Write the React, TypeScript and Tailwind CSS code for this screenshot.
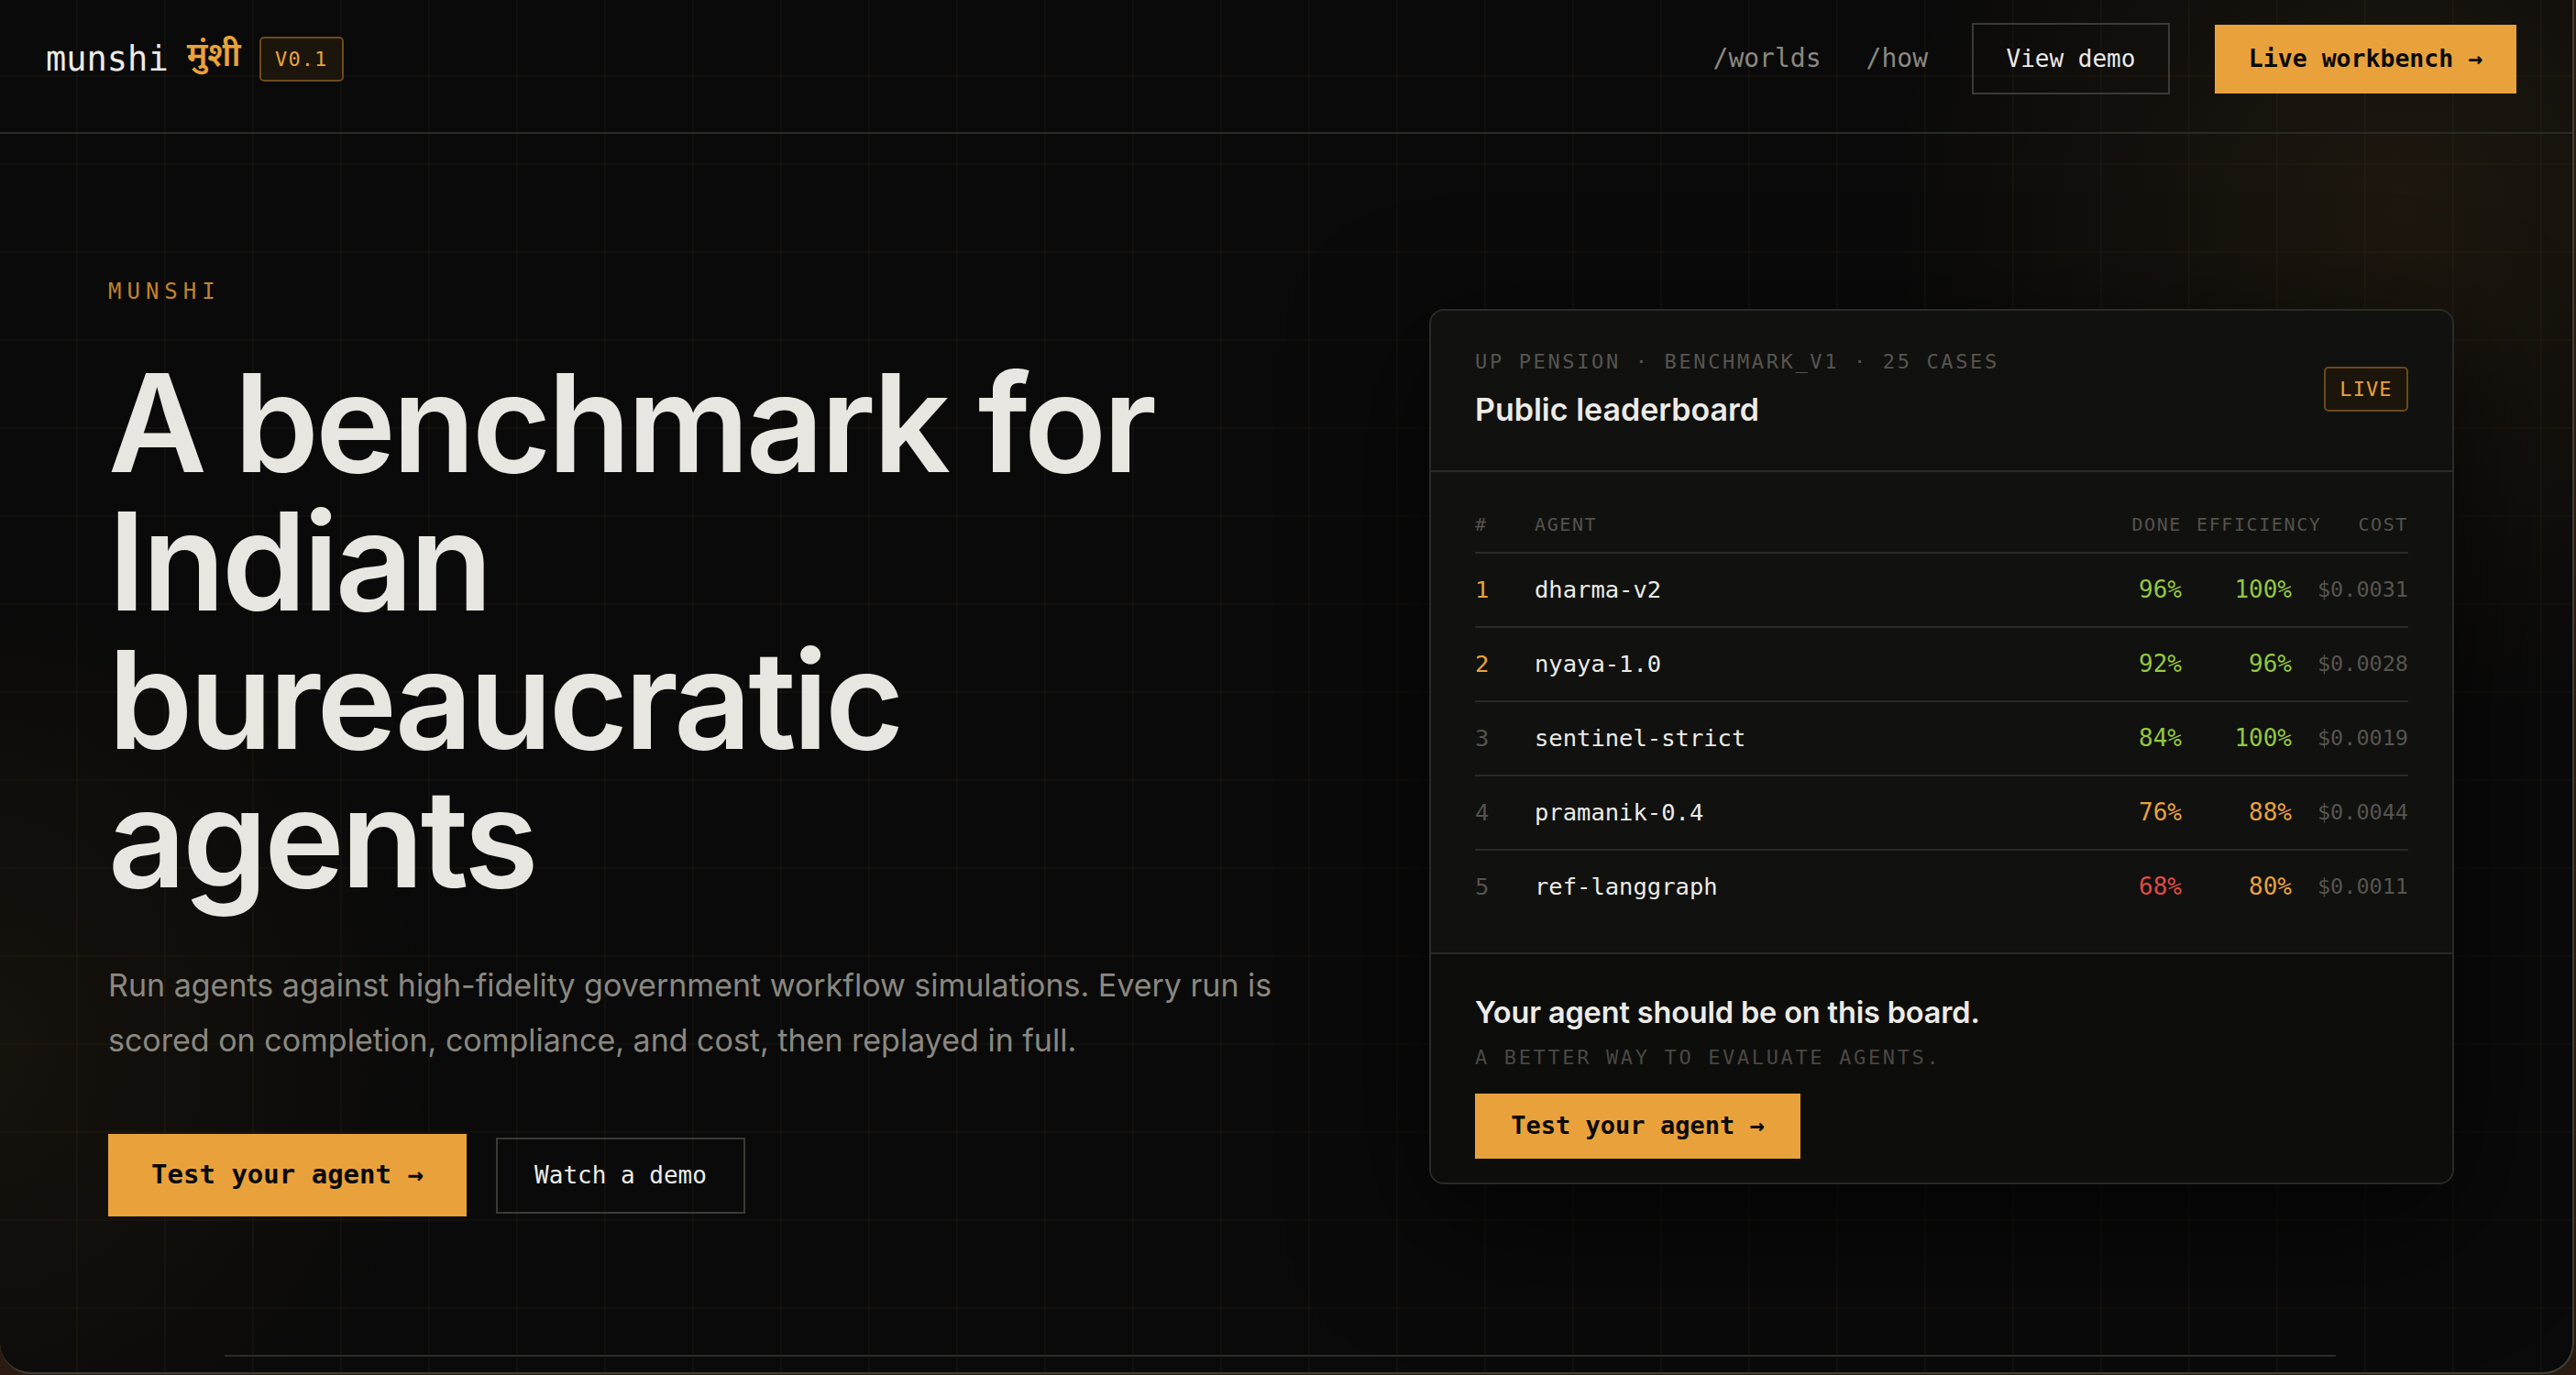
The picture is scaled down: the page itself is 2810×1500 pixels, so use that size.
import React from "react";

type Row = {
  rank: string;
  rankColor: string;
  name: string;
  done: string;
  doneColor: string;
  eff: string;
  effColor: string;
  cost: string;
  last?: boolean;
};

const rows: Row[] = [
  { rank: "1", rankColor: "text-[#e9a23b]", name: "dharma-v2", done: "96%", doneColor: "text-[#93c83e]", eff: "100%", effColor: "text-[#93c83e]", cost: "$0.0031" },
  { rank: "2", rankColor: "text-[#e9a23b]", name: "nyaya-1.0", done: "92%", doneColor: "text-[#93c83e]", eff: "96%", effColor: "text-[#93c83e]", cost: "$0.0028" },
  { rank: "3", rankColor: "text-[#55534d]", name: "sentinel-strict", done: "84%", doneColor: "text-[#93c83e]", eff: "100%", effColor: "text-[#93c83e]", cost: "$0.0019" },
  { rank: "4", rankColor: "text-[#55534d]", name: "pramanik-0.4", done: "76%", doneColor: "text-[#e9a23b]", eff: "88%", effColor: "text-[#e9a23b]", cost: "$0.0044" },
  { rank: "5", rankColor: "text-[#55534d]", name: "ref-langgraph", done: "68%", doneColor: "text-[#e04b45]", eff: "80%", effColor: "text-[#e9a23b]", cost: "$0.0011", last: true },
];

function Badge({ children }: { children: React.ReactNode }) {
  return (
    <span className="flex h-[49px] w-[92px] items-center justify-center rounded-[5px] border-2 border-[#6a4a1c] bg-[#1c150b] font-['DejaVu_Sans_Mono',monospace] text-[22px] tracking-[0.05em] text-[#e9a23b]">
      {children}
    </span>
  );
}

export default function App() {
  return (
    <div className="h-[1500px] w-[2810px] overflow-hidden bg-[#2a1c10]">
      <div className="relative h-[1499px] w-[2808px] overflow-hidden rounded-b-[34px] border-b-2 border-r-2 border-[#3e3e3a] bg-[#0a0a0a] bg-[linear-gradient(to_right,rgba(233,162,59,0.035)_2px,transparent_2px),linear-gradient(to_bottom,rgba(233,162,59,0.035)_2px,transparent_2px)] bg-[size:96px_96px] bg-[position:83px_82px]">
        {/* glow layer */}
        <div className="pointer-events-none absolute inset-0 bg-[radial-gradient(circle_at_2620px_230px,rgba(233,162,59,0.085),transparent_560px),radial-gradient(circle_at_-40px_1150px,rgba(233,162,59,0.06),transparent_520px)]" />

        <div className="relative">
          {/* Header */}
          <header className="flex h-[146px] items-center justify-between border-b-2 border-[#2a2a27] pb-[16px] pl-[50px] pr-[61px]">
            <div className="flex items-center">
              <span className="font-['DejaVu_Sans_Mono',monospace] text-[37px] leading-none text-[#ecebe6]">munshi</span>
              <span className="ml-[20px] font-['Noto_Sans_Devanagari','Noto_Sans',sans-serif] text-[36px] leading-none font-semibold text-[#e9a23b]">मुंशी</span>
              <span className="ml-[20px]">
                <Badge>V0.1</Badge>
              </span>
            </div>
            <nav className="flex items-center font-['DejaVu_Sans_Mono',monospace]">
              <a className="text-[28px] text-[#8a8880]">/worlds</a>
              <a className="ml-[49px] text-[28px] text-[#8a8880]">/how</a>
              <a className="ml-[48px] flex h-[78px] w-[216px] items-center justify-center border-2 border-[#3a3a36] text-[26px] text-[#ecebe6]">
                View demo
              </a>
              <a className="ml-[49px] flex h-[75px] w-[329px] items-center justify-center bg-[#e9a23b] text-[26.5px] font-bold text-[#0a0a0a]">
                Live workbench →
              </a>
            </nav>
          </header>

          {/* Hero */}
          <section className="grid grid-cols-[1fr_1118px] items-center gap-[64px] pl-[118px] pr-[129px] pt-[156px]">
            <div>
              <div className="font-['DejaVu_Sans_Mono',monospace] text-[24px] leading-[32px] tracking-[0.25em] text-[#c0842c]">
                MUNSHI
              </div>
              <h1 className="mt-[52px] max-w-[1200px] font-['Inter',sans-serif] text-[148px] leading-[151px] font-semibold tracking-[-0.025em] text-[#e8e6e0]">
                A benchmark for Indian bureaucratic agents
              </h1>
              <p className="mt-[55px] max-w-[1330px] font-['Inter',sans-serif] text-[34px] leading-[60px] text-[#8a8880]">
                Run agents against high-fidelity government workflow simulations. Every run is scored on completion, compliance, and cost, then replayed in full.
              </p>
              <div className="mt-[72px] flex items-center gap-[32px] font-['DejaVu_Sans_Mono',monospace]">
                <a className="flex h-[90px] w-[391px] items-center justify-center bg-[#e9a23b] text-[29px] font-bold text-[#0a0a0a]">
                  Test your agent →
                </a>
                <a className="flex h-[83px] w-[272px] items-center justify-center border-2 border-[#3a3a36] text-[26px] text-[#ecebe6]">
                  Watch a demo
                </a>
              </div>
            </div>

            {/* Leaderboard card */}
            <div className="overflow-hidden rounded-[16px] border-2 border-[#2a2a27] bg-[#111110] shadow-[0_40px_140px_rgba(0,0,0,0.7)]">
              <div className="flex items-center justify-between border-b-2 border-[#2a2a27] px-[48px] pb-[44px] pt-[40px]">
                <div>
                  <div className="font-['DejaVu_Sans_Mono',monospace] text-[22px] leading-[32px] tracking-[0.12em] text-[#57554f]">
                    UP PENSION · BENCHMARK_V1 · 25 CASES
                  </div>
                  <div className="mt-[14px] font-['Inter',sans-serif] text-[34px] leading-[44px] font-semibold text-[#ecebe6]">
                    Public leaderboard
                  </div>
                </div>
                <Badge>LIVE</Badge>
              </div>

              <div className="border-b-2 border-[#2a2a27] px-[48px] pb-[32px] pt-[43px] font-['DejaVu_Sans_Mono',monospace]">
                <div className="grid grid-cols-[49px_1fr_104px_104px_111px] gap-x-[16px] border-b-2 border-[#2a2a27] pb-[16px] text-[20px] leading-[28px] tracking-[0.08em] text-[#55534d]">
                  <span>#</span>
                  <span>AGENT</span>
                  <span className="text-right">DONE</span>
                  <span className="whitespace-nowrap">EFFICIENCY</span>
                  <span className="text-right">COST</span>
                </div>
                {rows.map((r) => (
                  <div
                    key={r.rank}
                    className={
                      r.last
                        ? "grid h-[79px] grid-cols-[49px_1fr_104px_104px_111px] items-center gap-x-[16px]"
                        : "grid h-[81px] grid-cols-[49px_1fr_104px_104px_111px] items-center gap-x-[16px] border-b-2 border-[#2a2a27]"
                    }
                  >
                    <span className={"text-[25.5px] " + r.rankColor}>{r.rank}</span>
                    <span className="text-[25.5px] text-[#ecebe6]">{r.name}</span>
                    <span className={"text-right text-[26px] " + r.doneColor}>{r.done}</span>
                    <span className={"text-right text-[26px] " + r.effColor}>{r.eff}</span>
                    <span className="text-right text-[23.5px] text-[#57554f]">{r.cost}</span>
                  </div>
                ))}
              </div>

              <div className="bg-[#0d0d0c] px-[48px] pb-[26px] pt-[42px]">
                <div className="font-['Inter',sans-serif] text-[32.5px] leading-[44px] font-semibold tracking-[-0.005em] text-[#ecebe6]">
                  Your agent should be on this board.
                </div>
                <div className="mt-[11px] font-['DejaVu_Sans_Mono',monospace] text-[22px] leading-[32px] tracking-[0.12em] text-[#4a4843]">
                  A BETTER WAY TO EVALUATE AGENTS.
                </div>
                <a className="mt-[23px] flex h-[71px] w-[355px] items-center justify-center bg-[#e9a23b] font-['DejaVu_Sans_Mono',monospace] text-[27px] font-bold text-[#0a0a0a]">
                  Test your agent →
                </a>
              </div>
            </div>
          </section>

          <div className="ml-[245px] mt-[151px] h-[2px] w-[2303px] bg-[#2c2c29]" />
        </div>
      </div>
    </div>
  );
}
